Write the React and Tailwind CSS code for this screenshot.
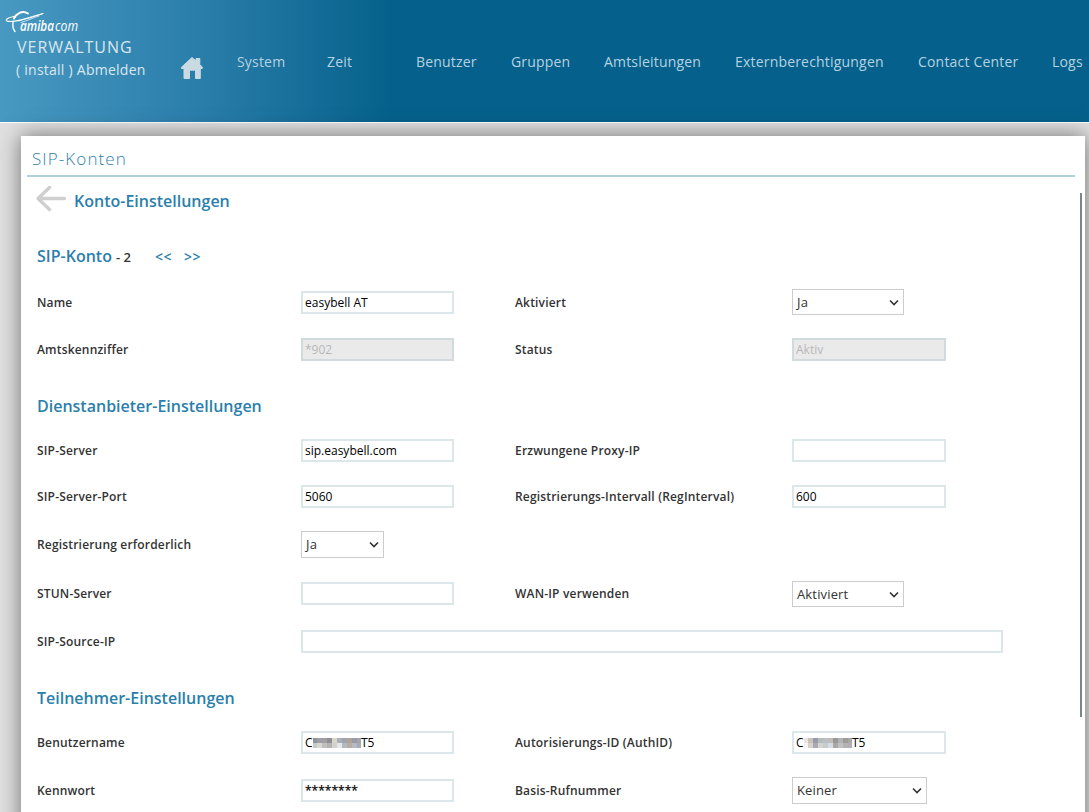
import clsx from "clsx";

const NAV = [
  { label: "System", cls: "w-[90px]" },
  { label: "Zeit", cls: "w-[89px]" },
  { label: "Benutzer", cls: "w-[95px]" },
  { label: "Gruppen", cls: "w-[93px]" },
  { label: "Amtsleitungen", cls: "w-[131px]" },
  { label: "Externberechtigungen", cls: "w-[183px]" },
  { label: "Contact Center", cls: "w-[134px]" },
  { label: "Logs", cls: "w-[37px]" },
];

// two rows of blocks covering the middle of the account id
const MASK_USER = [
  ["#8f959a", "#a09fa3", "#a3a0a5", "#8f8d96", "#d8d6c9", "#acb0bc", "#9fa4ae", "#b0a498", "#989ca8", "#a0a5af"],
  ["#c9c9c5", "#d9d9d3", "#c0c0be", "#b5b2b1", "#d1d2d0", "#e5e8ea", "#b4b9c2", "#b3ada5", "#b8bbc2", "#a8acb4"],
];
const MASK_AUTH = [
  ["#e9e5e1", "#c9c3bc", "#9b9aaa", "#b5bbb5", "#babfca", "#c0bdb9", "#9b9897", "#afb5b5", "#a09b9b", "#a7a7ac"],
  ["#f6f5f3", "#d7d3cc", "#a9a8b4", "#d3d5cc", "#c6cbd0", "#d8dbe3", "#aba8aa", "#c0c2c0", "#b5b2b4", "#b1afb2"],
];

export default function App() {
  return (
    <div className="h-[812px] w-[1089px] overflow-hidden bg-[#e0e0e0] font-['Open_Sans','Noto_Sans',sans-serif] text-[#333]">
      <Header />
      <main className="ml-[21px] mt-[13px] flex h-[700px] w-[1064px] bg-white pl-[6px] shadow-[0_0_20px_0_rgba(0,0,0,0.5)]">
        <div className="w-[1048px]">
          <h1 className="h-[41px] border-b-2 border-[#b4d0df] pl-[5px] pt-[11px] text-[17px] font-light leading-[24px] tracking-[1.1px] text-[#3182a9]">
            SIP-Konten
          </h1>
          <AccountForm />
        </div>
        <div className="ml-[5px] mt-[57px] h-[524px] w-[2px] bg-[#7a8788]" />
      </main>
    </div>
  );
}

function Header() {
  return (
    <header className="flex h-[123px] border-b border-white bg-[linear-gradient(to_right,#4899c2_0px,#2a7eaa_200px,#05618b_390px)] text-[#dbe7ee]">
      <div className="w-[180px] pt-[9px]">
        <Logo />
        <div className="-mt-px pl-[17px] text-[16px] leading-[22px] tracking-[1px]">VERWALTUNG</div>
        <div className="pl-[16px] pt-[2px] text-[14px] leading-[20px] tracking-[0.25px]">( install ) Abmelden</div>
      </div>
      <HomeIcon />
      <nav className="ml-[34px] mt-[52px] flex text-[14px] leading-[20px] tracking-[0.19px] text-[#b5d2e1]">
        {NAV.map((n) => (
          <a key={n.label} className={clsx("shrink-0 whitespace-nowrap", n.cls)}>{n.label}</a>
        ))}
      </nav>
    </header>
  );
}

function Logo() {
  return (
    <svg className="ml-[5px] block" width="80" height="28" viewBox="0 0 80 28">
      <g fill="none" stroke="#fff" strokeLinecap="round">
        <path d="M9 9.500C11 5 17 0.500 23 4.500" strokeWidth="2" />
        <path d="M9 7.500C3 8.500 0 10.500 2 12C6 14 24 9.500 38 4.500" strokeWidth="1.200" />
        <path d="M14 12C21 9.500 29 6.500 37 5M16 13.500C23 11.500 27 9 34 7" strokeWidth="0.700" />
        <path d="M8 13.500C7.500 17 8 20 10 22.500" strokeWidth="1.400" />
      </g>
      <text x="15" y="22" fill="#fff" fontFamily="Open Sans" fontSize="14" fontStyle="italic" fontWeight="600" textLength="34" lengthAdjust="spacingAndGlyphs">amiba</text>
      <text x="50" y="22" fill="#fff" fontFamily="Open Sans" fontSize="14" fontStyle="italic" textLength="23" lengthAdjust="spacingAndGlyphs">com</text>
    </svg>
  );
}

function HomeIcon() {
  return (
    <svg className="mt-[56px] shrink-0" width="23" height="24" viewBox="0 0 23 24">
      <path fill="#c9dae3" stroke="#c9dae3" strokeWidth="1" strokeLinejoin="round" d="M12 1.500L16 5V2.500H19.800V8.500L22.300 11.200V12.500H20.300V22.500H15.500V14.200H9.500V22.500H4V12.500H1.500V11.200Z" />
    </svg>
  );
}

function AccountForm() {
  return (
    <div className="pl-[9px]">
      <div className="flex h-[41px] pt-[8px]">
        <svg width="32" height="28" viewBox="0 0 32 28" fill="none" stroke="#cfcfcf" strokeWidth="3.400" strokeLinecap="round" strokeLinejoin="round">
          <path d="M13.500 2.500L2 13.500L13.500 24.500M2.500 13.500H28.500" />
        </svg>
        <Heading className="ml-[6px] mt-[4px]">Konto-Einstellungen</Heading>
      </div>

      <div className="mt-[26px] flex h-[26px] items-baseline pl-px">
        <Heading className="w-[76px]">SIP-Konto</Heading>
        <span className="ml-[3px] w-[39px] text-[13px] font-semibold">- 2</span>
        <a className="w-[29px] text-[14px] font-semibold tracking-[0.4px] text-[#2b80ab]">&lt;&lt;</a>
        <a className="text-[14px] font-semibold tracking-[0.4px] text-[#2b80ab]">&gt;&gt;</a>
      </div>

      <Row className="mt-[19px]">
        <Label>Name</Label>
        <Input value="easybell AT" />
        <Label>Aktiviert</Label>
        <Select className="h-[26px] w-[112px] self-start" value="Ja" />
      </Row>
      <Row className="mt-[20px]">
        <Label>Amtskennziffer</Label>
        <Input value="*902" disabled />
        <Label>Status</Label>
        <Input className="w-[154px]" value="Aktiv" disabled />
      </Row>

      <Heading className="ml-px mt-[31px]">Dienstanbieter-Einstellungen</Heading>
      <Row className="mt-[19px]">
        <Label>SIP-Server</Label>
        <Input value="sip.easybell.com" />
        <Label>Erzwungene Proxy-IP</Label>
        <Input className="w-[154px]" />
      </Row>
      <Row className="mt-[19px]">
        <Label>SIP-Server-Port</Label>
        <Input value="5060" />
        <Label>Registrierungs-Intervall (RegInterval)</Label>
        <Input className="w-[154px]" value="600" />
      </Row>
      <Row className="mt-[21px]">
        <Label>Registrierung erforderlich</Label>
        <Select className="h-[27px] w-[83px] pb-px" value="Ja" />
      </Row>
      <Row className="mt-[22px]">
        <Label>STUN-Server</Label>
        <Input />
        <Label>WAN-IP verwenden</Label>
        <Select className="h-[26px] w-[112px] self-end" value="Aktiviert" />
      </Row>
      <Row className="mt-[21px]">
        <Label>SIP-Source-IP</Label>
        <Input className="w-[702px]" />
      </Row>

      <Heading className="ml-px mt-[31px]">Teilnehmer-Einstellungen</Heading>
      <Row className="mt-[19px]">
        <Label>Benutzername</Label>
        <Input value={<MaskedId mask={MASK_USER} />} />
        <Label>Autorisierungs-ID (AuthID)</Label>
        <Input className="w-[154px]" value={<MaskedId mask={MASK_AUTH} />} />
      </Row>
      <Row className="mt-[21px]">
        <Label>Kennwort</Label>
        <Input value={<span className="[-webkit-text-stroke:0.2px]">********</span>} />
        <Label>Basis-Rufnummer</Label>
        <Select className="h-[27px] w-[135px] pb-px" value="Keiner" />
      </Row>
    </div>
  );
}

function Heading({ className, children }) {
  return (
    <h2 className={clsx("h-[24px] whitespace-nowrap text-[16px] font-semibold leading-[24px] text-[#2b80ab]", className)}>
      {children}
    </h2>
  );
}

function Row({ className, children }) {
  return (
    <div className={clsx("ml-px grid h-[27px] grid-cols-[264px_214px_277px_154px] items-center", className)}>
      {children}
    </div>
  );
}

function Label({ children }) {
  return <label className="whitespace-nowrap text-[12px] font-semibold leading-[18px] tracking-[0.18px]">{children}</label>;
}

function Input({ value, disabled, className = "w-[153px]" }) {
  return (
    <div className={clsx(
      "flex h-[23px] items-center whitespace-nowrap border-2 pl-[2px] text-[12px] leading-[18px]",
      disabled ? "border-[#d1dbdd] bg-[#eaeaea] text-[#b8b8b8]" : "border-[#dce7e9] bg-white text-black",
      className,
    )}>
      {value}
    </div>
  );
}

function Select({ value, className }) {
  return (
    <div className={clsx("flex items-center justify-between border border-[#ccc] bg-white pl-[4px] pr-[4px] text-[13px] leading-[18px] tracking-[0.15px]", className)}>
      {value}
      <svg className="mt-px" width="10" height="7" viewBox="0 0 10 7" fill="none" stroke="#333" strokeWidth="1.600">
        <path d="M1 1.500L5 5.500L9 1.500" />
      </svg>
    </div>
  );
}

function MaskedId({ mask }) {
  return (
    <>
      <span className="w-[8px]">C</span>
      <svg width="48" height="10" viewBox="0 0 48 10" shapeRendering="crispEdges">
        {mask.map((row, y) => row.map((color, x) => (
          <rect key={`${x}-${y}`} x={x * 5 - 1} y={y * 5} width="5" height="5" fill={color} />
        )))}
      </svg>
      <span>T5</span>
    </>
  );
}
